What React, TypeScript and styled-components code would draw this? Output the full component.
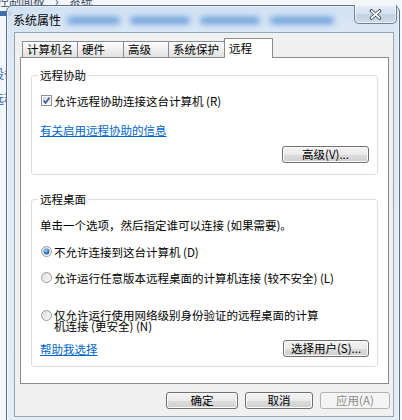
import React from 'react';
import styled, { createGlobalStyle } from 'styled-components';

const GlobalStyle = createGlobalStyle`
  html, body {
    margin: 0;
    padding: 0;
  }
  body {
    font-family: "Noto Sans CJK SC", "Noto Sans", sans-serif;
    font-size: 11.5px;
    color: #000;
  }
`;

const Desktop = styled.div`
  position: relative;
  width: 402px;
  height: 420px;
  overflow: hidden;
  background: #f3f6fa;
`;

// explorer window lying behind the dialog
const Explorer = styled.div`
  display: flex;
  flex-direction: column;
`;

const Breadcrumb = styled.div`
  display: flex;
  gap: 10px;
  margin: -6px 0 0 -3px;
  height: 14px;
  font-size: 12px;
  line-height: 14px;
  color: #3b4a5c;
  white-space: nowrap;
`;

const AddressBand = styled.div`
  margin-top: 3px;
  height: 5px;
  width: 12px;
  background: #3f6fae;
`;

const SideLinks = styled.div`
  display: flex;
  flex-direction: column;
  gap: 11px;
  margin: 51px 0 0 -8px;
  font-size: 12px;
  line-height: 14px;
  color: #1f5fae;
  white-space: nowrap;
`;

const Window = styled.div`
  position: absolute;
  left: 6px;
  top: 5px;
  width: 394px;
  height: 420px;
  box-sizing: border-box;
  display: flex;
  flex-direction: column;
  border: 1px solid #5d6f83;
  border-radius: 7px 7px 0 0;
  background: linear-gradient(180deg, rgba(205, 223, 243, 0.88) 0px, rgba(218, 231, 246, 0.97) 28px, #dfe9f5 60px, #e4ecf6 100%);
  box-shadow: inset 0 0 0 1px rgba(255, 255, 255, 0.55);
`;

const TitleBar = styled.div`
  display: flex;
  align-items: flex-start;
  height: 26px;
  padding-left: 6px;
`;

const Title = styled.div`
  padding-top: 7px;
  font-size: 12px;
  line-height: 14px;
  white-space: nowrap;
`;

const GlassBlur = styled.div`
  display: flex;
  gap: 10px;
  margin: 11px 0 0 6px;
`;

const Blob = styled.span<{ $w: number }>`
  width: ${p => p.$w}px;
  height: 7px;
  border-radius: 4px;
  background: #4a8ad2;
  filter: blur(3px);
  opacity: 0.8;
`;

const CloseButton = styled.div`
  margin: -1px 2px 0 auto;
  width: 43px;
  height: 19px;
  box-sizing: border-box;
  display: flex;
  align-items: center;
  justify-content: center;
  border: 1px solid #6f8296;
  border-top: none;
  border-radius: 0 0 5px 5px;
  background: linear-gradient(180deg, #e6eef7 0%, #d3dfec 50%, #c2d2e4 51%, #cddbea 100%);
  box-shadow: inset 0 0 0 1px rgba(255, 255, 255, 0.6);
`;

const Content = styled.div`
  flex: 1;
  display: flex;
  flex-direction: column;
  margin: 0 5px 7px 7px;
  padding: 5px 4px 0 5px;
  border: 1px solid #97a5b4;
  background: #f0f0f0;
`;

const TabStrip = styled.div`
  display: flex;
  align-items: flex-end;
  height: 19px;
  padding-left: 2px;
  position: relative;
  z-index: 1;
`;

const Tab = styled.div<{ $w: number; $active?: boolean }>`
  width: ${p => p.$w}px;
  box-sizing: border-box;
  margin-left: -1px;
  &:first-child {
    margin-left: 0;
  }
  border: 1px solid #898c95;
  border-bottom: none;
  white-space: nowrap;
  padding-left: 4px;
  height: ${p => (p.$active ? 20 : 16)}px;
  line-height: ${p => (p.$active ? 14 : 15)}px;
  padding-top: ${p => (p.$active ? 2 : 0)}px;
  margin-bottom: ${p => (p.$active ? -1 : 0)}px;
  background: ${p => (p.$active ? '#fff' : 'linear-gradient(180deg, #fdfdfd 0%, #eeeeee 50%, #e1e1e1 100%)')};
`;

const Panel = styled.div`
  height: 327px;
  box-sizing: border-box;
  border: 1px solid #898c95;
  background: #fff;
  padding: 10px 10px 0 10px;
  display: flex;
  flex-direction: column;
`;

const Group = styled.fieldset<{ $gap?: number }>`
  margin: ${p => p.$gap ?? 0}px 0 0 0;
  min-width: 0;
  border: 1px solid #d5dfe5;
  border-radius: 3px;
  padding: 0 8px 0 6px;
  display: flex;
  flex-direction: column;
`;

const Legend = styled.legend`
  padding: 0 2px;
  line-height: 14px;
`;

const Line = styled.div<{ $top: number }>`
  margin-top: ${p => p.$top}px;
  padding-left: 2px;
  line-height: 14px;
  white-space: nowrap;
`;

const Option = styled.label<{ $top: number }>`
  display: flex;
  align-items: flex-start;
  gap: 2px;
  margin-top: ${p => p.$top}px;
  padding-left: 3px;
  line-height: 14px;
  svg {
    flex: none;
    margin-top: 1px;
  }
`;

const OptionText = styled.span<{ $wrap?: boolean }>`
  white-space: ${p => (p.$wrap ? 'normal' : 'nowrap')};
  width: ${p => (p.$wrap ? '268px' : 'auto')};
  line-height: ${p => (p.$wrap ? '11px' : '14px')};
  margin-top: ${p => (p.$wrap ? '1px' : '0')};
`;

const Link = styled.a`
  color: #0066cc;
  text-decoration: underline;
  cursor: pointer;
`;

const ActionRow = styled.div<{ $top: number; $bottom: number }>`
  display: flex;
  align-items: center;
  justify-content: space-between;
  margin-top: ${p => p.$top}px;
  margin-bottom: ${p => p.$bottom}px;
  padding-left: 2px;
`;

const Button = styled.button<{ $w: number }>`
  width: ${p => p.$w}px;
  height: 17px;
  box-sizing: border-box;
  margin-left: auto;
  padding: 0;
  font-family: inherit;
  font-size: 11.5px;
  line-height: 15px;
  color: #000;
  border: 1px solid #707070;
  border-radius: 3px;
  background: linear-gradient(180deg, #f2f2f2 0%, #ebebeb 50%, #dddddd 51%, #cfcfcf 100%);
  box-shadow: inset 0 0 0 1px #fbfbfb;
  &:disabled {
    color: #8a8a8a;
    border-color: #adb2b5;
    background: #f4f4f4;
    box-shadow: none;
  }
`;

const ButtonRow = styled.div`
  display: flex;
  justify-content: flex-end;
  gap: 7px;
  margin: 8px -1px 0 0;
  button {
    margin-left: 0;
  }
`;

const CheckBox = () => (
  <svg width="11" height="11" viewBox="0 0 11 11">
    <defs>
      <linearGradient id="cbg" x1="0" y1="0" x2="1" y2="1">
        <stop offset="0" stopColor="#cfd8e3" />
        <stop offset="1" stopColor="#f6f8fa" />
      </linearGradient>
    </defs>
    <rect x="0.5" y="0.5" width="10" height="10" fill="#fff" stroke="#8e8f8f" />
    <rect x="2" y="2" width="7" height="7" fill="url(#cbg)" />
    <path d="M2.6 5.4 L4.6 7.9 L8.6 2.6" fill="none" stroke="#3a559a" strokeWidth="1.6" />
  </svg>
);

const Radio = ({ on }: { on?: boolean }) => (
  <svg width="11" height="11" viewBox="0 0 11 11">
    <defs>
      <linearGradient id="rbg" x1="0" y1="0" x2="1" y2="1">
        <stop offset="0" stopColor="#dcdcdc" />
        <stop offset="1" stopColor="#fbfbfb" />
      </linearGradient>
      <radialGradient id="rdot" cx="0.4" cy="0.35" r="0.7">
        <stop offset="0" stopColor="#b9e2fb" />
        <stop offset="0.5" stopColor="#3f8ad6" />
        <stop offset="1" stopColor="#154f9c" />
      </radialGradient>
    </defs>
    <circle cx="5.5" cy="5.5" r="5" fill="url(#rbg)" stroke="#9a9a9a" />
    {on && <circle cx="5.5" cy="5.5" r="2.9" fill="url(#rdot)" />}
  </svg>
);

const CloseGlyph = () => (
  <svg width="13" height="11" viewBox="0 0 13 11">
    <path d="M2.5 2 L10.5 9 M10.5 2 L2.5 9" stroke="#3e4a5a" strokeWidth="3.6" strokeLinecap="round" />
    <path d="M2.5 2 L10.5 9 M10.5 2 L2.5 9" stroke="#fff" strokeWidth="1.7" strokeLinecap="round" />
  </svg>
);

const tabs = [
  { label: '计算机名', w: 56 },
  { label: '硬件', w: 47 },
  { label: '高级', w: 46 },
  { label: '系统保护', w: 57 },
  { label: '远程', w: 49, active: true },
];

export default function App() {
  return (
    <Desktop>
      <GlobalStyle />
      <Explorer>
        <Breadcrumb>
          <span>控制面板</span>
          <span>›</span>
          <span>系统</span>
        </Breadcrumb>
        <AddressBand />
        <SideLinks>
          <span>设备</span>
          <span>远程</span>
        </SideLinks>
      </Explorer>

      <Window>
        <TitleBar>
          <Title>系统属性</Title>
          <GlassBlur>
            <Blob $w={53} />
            <Blob $w={60} />
            <Blob $w={60} />
            <Blob $w={64} />
          </GlassBlur>
          <CloseButton>
            <CloseGlyph />
          </CloseButton>
        </TitleBar>

        <Content>
          <TabStrip>
            {tabs.map(t => (
              <Tab key={t.label} $w={t.w} $active={t.active}>
                {t.label}
              </Tab>
            ))}
          </TabStrip>
          <Panel>
            <Group>
              <Legend>远程协助</Legend>
              <Option $top={12}>
                <CheckBox />
                <OptionText>允许远程协助连接这台计算机 (R)</OptionText>
              </Option>
              <Line $top={15}>
                <Link>有关启用远程协助的信息</Link>
              </Line>
              <ActionRow $top={9} $bottom={11}>
                <Button $w={87}>高级(V)...</Button>
              </ActionRow>
            </Group>

            <Group $gap={17}>
              <Legend>远程桌面</Legend>
              <Line $top={12}>单击一个选项，然后指定谁可以连接 (如果需要)。</Line>
              <Option $top={13}>
                <Radio on />
                <OptionText>不允许连接到这台计算机 (D)</OptionText>
              </Option>
              <Option $top={12}>
                <Radio />
                <OptionText>允许运行任意版本远程桌面的计算机连接 (较不安全) (L)</OptionText>
              </Option>
              <Option $top={24}>
                <Radio />
                <OptionText $wrap>仅允许运行使用网络级别身份验证的远程桌面的计算机连接 (更安全) (N)</OptionText>
              </Option>
              <ActionRow $top={8} $bottom={9}>
                <Link>帮助我选择</Link>
                <Button $w={86}>选择用户(S)...</Button>
              </ActionRow>
            </Group>
          </Panel>
          <ButtonRow>
            <Button $w={72}>确定</Button>
            <Button $w={68}>取消</Button>
            <Button $w={70} disabled>
              应用(A)
            </Button>
          </ButtonRow>
        </Content>
      </Window>
    </Desktop>
  );
}
